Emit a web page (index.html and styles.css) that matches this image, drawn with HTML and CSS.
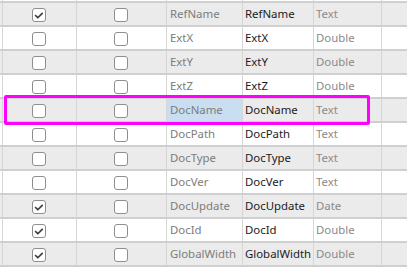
FILE: index.html
```html
<!DOCTYPE html>
<html>
<head>
<meta charset="utf-8">
<link rel="stylesheet" href="styles.css">
</head>
<body>
<div class="grid">
  <div class="row top"><div class="c c0"></div><div class="c c1"></div><div class="c c2"></div><div class="c c3"></div><div class="c c4"></div><div class="c c5"></div><div class="c c6"></div></div>

  <div class="row alt"><div class="c c0"></div><div class="c c1"><span class="cb on"><svg viewBox="0 0 14 14"><path d="M3 7.6 L5.6 10.2 L10.8 5"/></svg></span></div><div class="c c2"><span class="cb"></span></div><div class="c c3 src">RefName</div><div class="c c4 name">RefName</div><div class="c c5 type">Text</div><div class="c c6"></div></div>

  <div class="row"><div class="c c0"></div><div class="c c1"><span class="cb"></span></div><div class="c c2"><span class="cb"></span></div><div class="c c3 src">ExtX</div><div class="c c4 name">ExtX</div><div class="c c5 type">Double</div><div class="c c6"></div></div>

  <div class="row alt"><div class="c c0"></div><div class="c c1"><span class="cb"></span></div><div class="c c2"><span class="cb"></span></div><div class="c c3 src">ExtY</div><div class="c c4 name">ExtY</div><div class="c c5 type">Double</div><div class="c c6"></div></div>

  <div class="row"><div class="c c0"></div><div class="c c1"><span class="cb"></span></div><div class="c c2"><span class="cb"></span></div><div class="c c3 src">ExtZ</div><div class="c c4 name">ExtZ</div><div class="c c5 type">Double</div><div class="c c6"></div></div>

  <div class="row alt"><div class="c c0"></div><div class="c c1"><span class="cb"></span></div><div class="c c2"><span class="cb"></span></div><div class="c c3 src sel">DocName</div><div class="c c4 name">DocName</div><div class="c c5 type">Text</div><div class="c c6"></div></div>

  <div class="row"><div class="c c0"></div><div class="c c1"><span class="cb"></span></div><div class="c c2"><span class="cb"></span></div><div class="c c3 src">DocPath</div><div class="c c4 name">DocPath</div><div class="c c5 type">Text</div><div class="c c6"></div></div>

  <div class="row alt"><div class="c c0"></div><div class="c c1"><span class="cb"></span></div><div class="c c2"><span class="cb"></span></div><div class="c c3 src">DocType</div><div class="c c4 name">DocType</div><div class="c c5 type">Text</div><div class="c c6"></div></div>

  <div class="row"><div class="c c0"></div><div class="c c1"><span class="cb"></span></div><div class="c c2"><span class="cb"></span></div><div class="c c3 src">DocVer</div><div class="c c4 name">DocVer</div><div class="c c5 type">Text</div><div class="c c6"></div></div>

  <div class="row alt"><div class="c c0"></div><div class="c c1"><span class="cb on"><svg viewBox="0 0 14 14"><path d="M3 7.6 L5.6 10.2 L10.8 5"/></svg></span></div><div class="c c2"><span class="cb"></span></div><div class="c c3 src">DocUpdate</div><div class="c c4 name">DocUpdate</div><div class="c c5 type">Date</div><div class="c c6"></div></div>

  <div class="row"><div class="c c0"></div><div class="c c1"><span class="cb on"><svg viewBox="0 0 14 14"><path d="M3 7.6 L5.6 10.2 L10.8 5"/></svg></span></div><div class="c c2"><span class="cb"></span></div><div class="c c3 src">DocId</div><div class="c c4 name">DocId</div><div class="c c5 type">Double</div><div class="c c6"></div></div>

  <div class="row alt"><div class="c c0"></div><div class="c c1"><span class="cb on"><svg viewBox="0 0 14 14"><path d="M3 7.6 L5.6 10.2 L10.8 5"/></svg></span></div><div class="c c2"><span class="cb"></span></div><div class="c c3 src">GlobalWidth</div><div class="c c4 name">GlobalWidth</div><div class="c c5 type">Double</div><div class="c c6"></div></div>

  <div class="highlight"></div>
</div>
</body>
</html>
```

FILE: styles.css
```css
html, body {
  margin: 0;
  padding: 0;
  background: #ffffff;
}

.grid {
  position: relative;
  width: 407px;
  height: 271px;
  overflow: hidden;
  font-family: "Noto Sans", "Open Sans", sans-serif;
  font-size: 11.4px;
}

.row {
  display: grid;
  grid-template-columns: 3px 74px 90px 76px 71px 68px 1fr;
  height: 24px;
  box-sizing: border-box;
  border-bottom: 2px solid #cfcfcf;
  background: #ffffff;
}

.row.top {
  height: 3px;
}

.row.alt {
  background: #ebebeb;
}

.c {
  box-sizing: border-box;
  border-right: 1px solid #d6d6d6;
  display: flex;
  align-items: center;
  white-space: nowrap;
  overflow: hidden;
  line-height: 16px;
}

.c6 {
  border-right: none;
}

.c1, .c2 {
  justify-content: center;
  padding-top: 2px;
}

.c1 {
  padding-right: 1px;
}

.c2 {
  padding-right: 1px;
}

.src {
  color: #7c7c7c;
  padding-left: 3px;
}

.name {
  color: #1b1b1b;
  padding-left: 2px;
}

.type {
  color: #8a8a8a;
  padding-left: 2px;
}

.sel {
  background: #c9def1;
}

.cb {
  display: block;
  width: 14px;
  height: 14px;
  box-sizing: border-box;
  border: 1px solid #8e8e8e;
  border-radius: 3px;
  background: #ffffff;
}

.cb svg {
  display: block;
  width: 12px;
  height: 12px;
}

.cb path {
  fill: none;
  stroke: #3f3f3f;
  stroke-width: 2;
  stroke-linecap: round;
  stroke-linejoin: round;
}

.highlight {
  position: absolute;
  left: 4px;
  top: 95px;
  width: 366px;
  height: 30px;
  box-sizing: border-box;
  border: 3px solid #ff00ff;
  border-radius: 2px;
}
```
